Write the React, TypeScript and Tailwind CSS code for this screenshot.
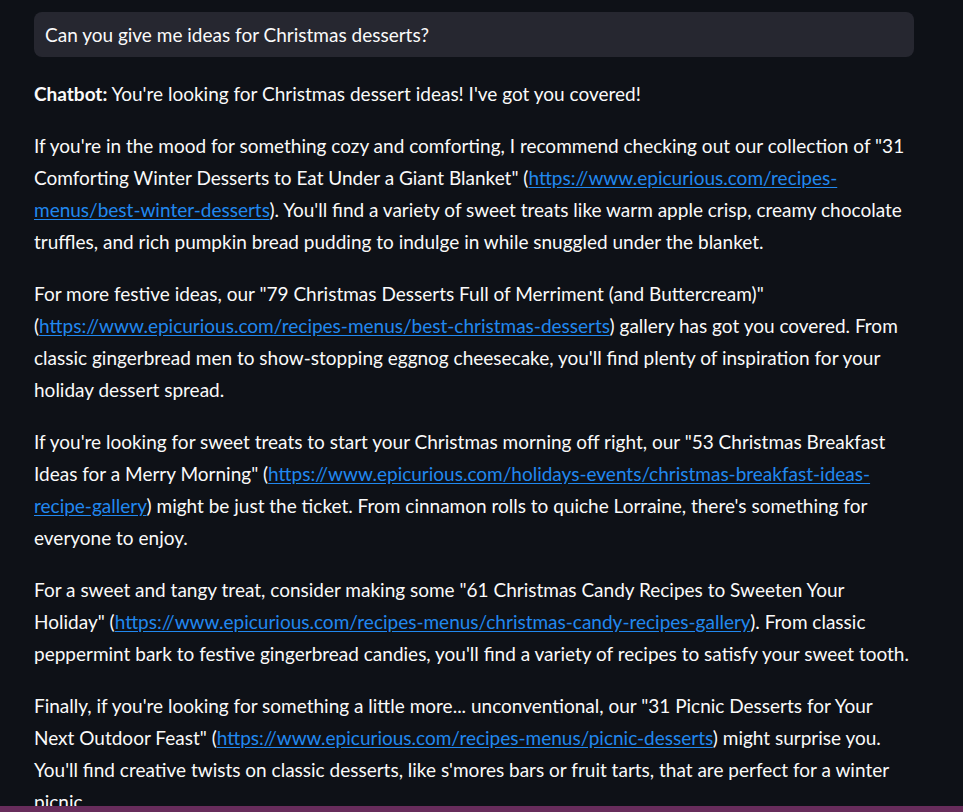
// Chat transcript — dark theme, single answer

const LINK = "text-[#2188ef] underline underline-offset-2";

function Link({ href }: { href: string }) {
  return (
    <a href={href} className={LINK}>
      {href}
    </a>
  );
}

export default function App() {
  return (
    <div
      className="w-[963px] h-[812px] overflow-hidden bg-[#0e1117] text-[#fafafa] relative"
      style={{ fontFamily: "Lato, 'Noto Sans', sans-serif" }}
    >
      <div className="w-[880px] ml-[34px] pt-3 text-[19px] leading-8">
        {/* User message */}
        <div className="h-[45px] rounded-lg bg-[#262730] px-[11px] flex items-center">
          Can you give me ideas for Christmas desserts?
        </div>

        {/* Bot answer */}
        <div className="mt-[21px] flex flex-col gap-5">
          <p>
            <strong>Chatbot:</strong> You're looking for Christmas dessert ideas! I've got you covered!
          </p>
          <p>
            If you're in the mood for something cozy and comforting, I recommend checking out our
            collection of "31 Comforting Winter Desserts to Eat Under a Giant Blanket" (
            <Link href="https://www.epicurious.com/recipes-menus/best-winter-desserts" />). You'll find
            a variety of sweet treats like warm apple crisp, creamy chocolate truffles, and rich pumpkin
            bread pudding to indulge in while snuggled under the blanket.
          </p>
          <p>
            For more festive ideas, our "79 Christmas Desserts Full of Merriment (and Buttercream)" (
            <Link href="https://www.epicurious.com/recipes-menus/best-christmas-desserts" />) gallery
            has got you covered. From classic gingerbread men to show-stopping eggnog cheesecake, you'll
            find plenty of inspiration for your holiday dessert spread.
          </p>
          <p>
            If you're looking for sweet treats to start your Christmas morning off right, our "53
            Christmas Breakfast Ideas for a Merry Morning" (
            <Link href="https://www.epicurious.com/holidays-events/christmas-breakfast-ideas-recipe-gallery" />)
            might be just the ticket. From cinnamon rolls to quiche Lorraine, there's something for
            everyone to enjoy.
          </p>
          <p>
            For a sweet and tangy treat, consider making some "61 Christmas Candy Recipes to Sweeten
            Your Holiday" (
            <Link href="https://www.epicurious.com/recipes-menus/christmas-candy-recipes-gallery" />).
            From classic peppermint bark to festive gingerbread candies, you'll find a variety of recipes
            to satisfy your sweet tooth.
          </p>
          <p>
            Finally, if you're looking for something a little more... unconventional, our "31 Picnic
            Desserts for Your Next Outdoor Feast" (
            <Link href="https://www.epicurious.com/recipes-menus/picnic-desserts" />) might surprise
            you. You'll find creative twists on classic desserts, like s'mores bars or fruit tarts, that
            are perfect for a winter picnic.
          </p>
        </div>
      </div>

      {/* bottom strip */}
      <div className="absolute left-0 right-0 bottom-0 h-[6px] bg-[#672c5b]" />
    </div>
  );
}
